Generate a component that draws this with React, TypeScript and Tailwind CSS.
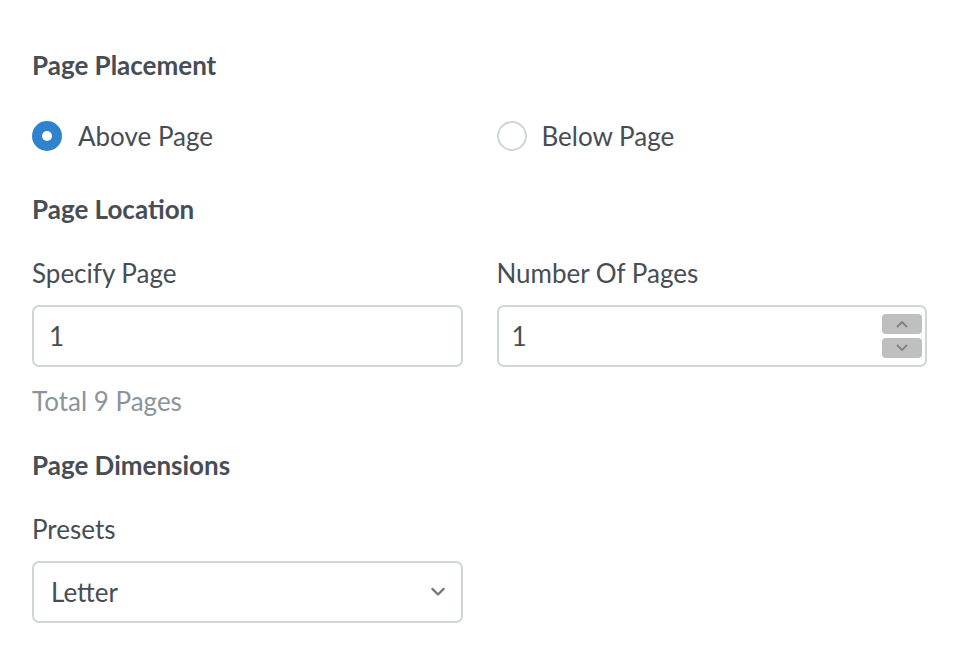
import React, { useState } from 'react';

const font = { fontFamily: 'Lato, "Noto Sans", sans-serif' };

const Chevron = ({ up, className }: { up?: boolean; className?: string }) => (
  <svg viewBox="0 0 12 8" className={className} fill="none" stroke="currentColor" strokeWidth="1.8" strokeLinecap="round" strokeLinejoin="round">
    {up ? <path d="M1.5 6.5 6 2l4.5 4.5" /> : <path d="M1.5 1.5 6 6l4.5-4.5" />}
  </svg>
);

export default function App() {
  const [placement, setPlacement] = useState<'above' | 'below'>('above');

  return (
    <div className="w-[960px] h-[664px] bg-white text-[#474d55] overflow-hidden" style={font}>
      <div className="pl-[32px] pr-[33px] pt-[49px] flex flex-col">
        {/* Page Placement */}
        <h2 className="text-[26px] leading-[32px] font-bold">Page Placement</h2>

        <div className="grid grid-cols-2 gap-[34px] mt-[39px] h-[32px]">
          <label className="flex items-center gap-[16px] cursor-pointer" onClick={() => setPlacement('above')}>
            <span className={`w-[30px] h-[30px] rounded-full flex items-center justify-center ${placement === 'above' ? 'bg-[#3182ce]' : 'border-2 border-[#cfd5db]'}`}>
              {placement === 'above' && <span className="w-[10px] h-[10px] rounded-full bg-white" />}
            </span>
            <span className="text-[26px] leading-[32px]">Above Page</span>
          </label>
          <label className="flex items-center gap-[15px] cursor-pointer" onClick={() => setPlacement('below')}>
            <span className={`w-[30px] h-[30px] rounded-full flex items-center justify-center ${placement === 'below' ? 'bg-[#3182ce]' : 'border-2 border-[#cfd5db]'}`}>
              {placement === 'below' && <span className="w-[10px] h-[10px] rounded-full bg-white" />}
            </span>
            <span className="text-[26px] leading-[32px]">Below Page</span>
          </label>
        </div>

        {/* Page Location */}
        <h2 className="text-[26px] leading-[32px] font-bold mt-[41px]">Page Location</h2>

        <div className="grid grid-cols-2 gap-[34px] mt-[32px]">
          <div className="flex flex-col">
            <span className="text-[26px] leading-[32px]">Specify Page</span>
            <div className="mt-[16px] h-[62px] rounded-[7px] border-2 border-[#cfd5db] flex items-center px-[15px] text-[26px]">1</div>
            <span className="text-[26px] leading-[32px] text-[#8b939b] mt-[18px]">Total 9 Pages</span>
          </div>
          <div className="flex flex-col">
            <span className="text-[26px] leading-[32px]">Number Of Pages</span>
            <div className="mt-[16px] h-[62px] rounded-[7px] border-2 border-[#cfd5db] flex items-center justify-between pl-[13px] pr-[3px] text-[26px]">
              <span>1</span>
              <div className="flex flex-col gap-[4px]">
                <button className="w-[40px] h-[20px] rounded-[4px] bg-[#bfbfbf] flex items-center justify-center text-[#7d858c]">
                  <Chevron up className="w-[12px] h-[8px]" />
                </button>
                <button className="w-[40px] h-[20px] rounded-[4px] bg-[#bfbfbf] flex items-center justify-center text-[#7d858c]">
                  <Chevron className="w-[12px] h-[8px]" />
                </button>
              </div>
            </div>
          </div>
        </div>

        {/* Page Dimensions */}
        <h2 className="text-[26px] leading-[32px] font-bold mt-[32px]">Page Dimensions</h2>

        <div className="grid grid-cols-2 gap-[34px] mt-[32px]">
          <div className="flex flex-col">
            <span className="text-[26px] leading-[32px]">Presets</span>
            <div className="mt-[16px] h-[62px] rounded-[7px] border-2 border-[#cfd5db] flex items-center justify-between pl-[17px] pr-[15px] text-[26px]">
              <span>Letter</span>
              <Chevron className="w-[16px] h-[10px] text-[#6f777f]" />
            </div>
          </div>
        </div>
      </div>
    </div>
  );
}
